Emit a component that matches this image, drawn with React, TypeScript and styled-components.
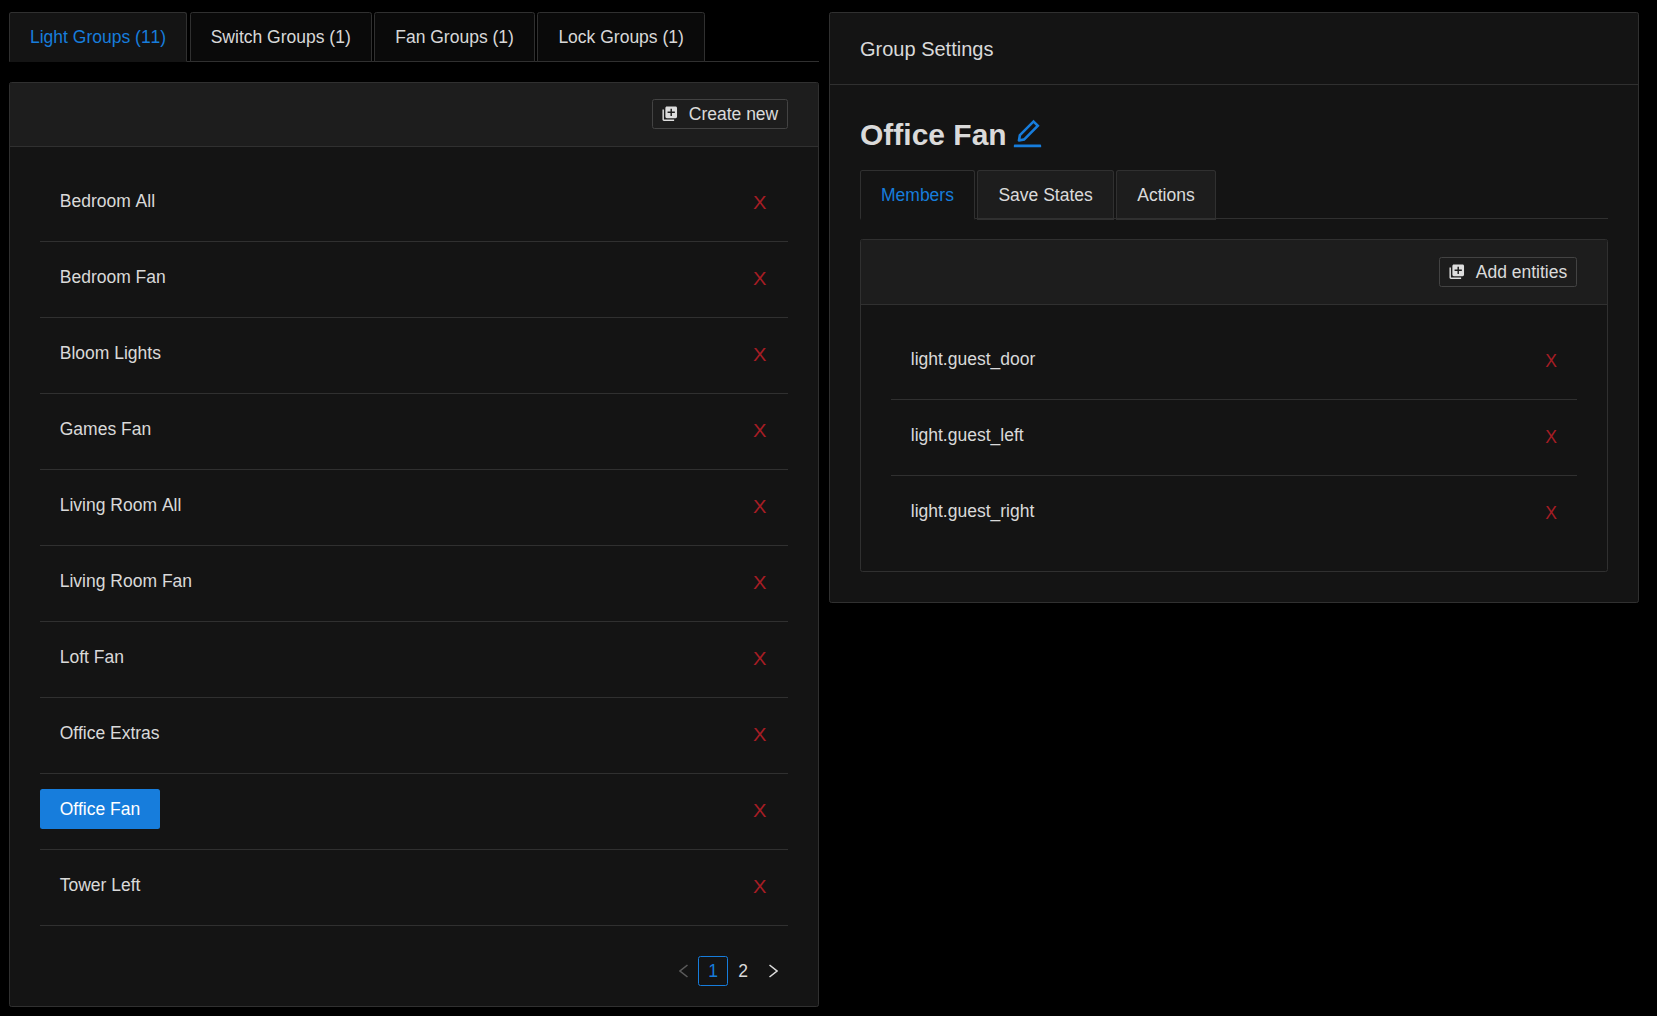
import React from 'react';
import styled, { createGlobalStyle } from 'styled-components';
import { MdLibraryAdd } from 'react-icons/md';
import { AiOutlineEdit } from 'react-icons/ai';

const GlobalStyle = createGlobalStyle`
  * { box-sizing: border-box; }
  body {
    margin: 0;
    background: #000;
    color: rgba(255, 255, 255, 0.85);
    font-family: "Liberation Sans", Arial, sans-serif;
    font-size: 17.5px;
    line-height: 27.5px;
    font-variant: tabular-nums;
    font-feature-settings: 'tnum';
  }
`;

const Page = styled.main`
  display: flex;
  align-items: flex-start;
  gap: 10px;
  padding: 12px 18px 0 9px;
`;

const Column = styled.section`
  flex: 0 0 810px;
  min-width: 0;
`;

const Card = styled.div`
  background: #141414;
  border: 1px solid #303030;
  border-radius: 2.5px;
`;

const Title = styled.h3`
  margin: 0;
  height: 72px;
  padding: 21px 30px 0;
  border-bottom: 1px solid #303030;
  font-size: 20px;
  font-weight: 500;
  line-height: 31.4px;
`;

const Toolbar = styled.div<{ $height: number }>`
  display: flex;
  align-items: flex-start;
  justify-content: flex-end;
  height: ${(p) => p.$height}px;
  padding: ${(p) => (p.$height > 64 ? 17 : 16)}px 30px 0;
  background: #1d1d1d;
  border-bottom: 1px solid #303030;
`;

const TabBar = styled.nav<{ $height: number }>`
  display: flex;
  gap: 2.5px;
  height: ${(p) => p.$height}px;
  margin-bottom: 20px;
  box-shadow: inset 0 -1px #303030;
`;

const Tab = styled.button<{ $active?: boolean; $bg: string; $edge: number }>`
  flex: none;
  height: 50px;
  padding: ${(p) => p.$edge + 1}px 20px 0;
  border: 1px solid #303030;
  border-bottom: ${(p) => p.$edge}px solid ${(p) => (p.$active ? '#141414' : '#303030')};
  border-radius: 2.5px 2.5px 0 0;
  background: ${(p) => (p.$active ? '#141414' : p.$bg)};
  color: ${(p) => (p.$active ? '#177ddc' : 'rgba(255, 255, 255, 0.85)')};
  font: inherit;
  font-kerning: ${(p) => (p.$active ? 'none' : 'auto')};
  white-space: nowrap;
`;

const SmallButton = styled.button`
  display: flex;
  align-items: center;
  gap: 10px;
  height: 30px;
  padding: 0 8.75px 0 8.6px;
  border: 1px solid #434343;
  border-radius: 2.5px;
  background: transparent;
  color: inherit;
  font: inherit;
  white-space: nowrap;
`;

const ButtonText = styled.span`
  padding-top: 1.5px;
`;

const List = styled.ul`
  margin: 0;
  padding: 0;
  list-style: none;
`;

const Row = styled.li`
  display: flex;
  align-items: flex-start;
  justify-content: space-between;
  height: 76px;
  padding-top: 15px;
  border-bottom: 1px solid #303030;
  &[data-last='true'] { border-bottom: 0; }
`;

const RowLabel = styled.button<{ $selected?: boolean; $unkerned?: boolean }>`
  height: 40px;
  padding: 1.5px 20px 0 19.75px;
  border: 0;
  border-radius: 2.5px;
  background: ${(p) => (p.$selected ? '#177ddc' : 'transparent')};
  color: ${(p) => (p.$selected ? '#fff' : 'inherit')};
  font: inherit;
  font-kerning: ${(p) => (p.$unkerned ? 'none' : 'auto')};
`;

const Remove = styled.button<{ $wide?: boolean }>`
  height: 40px;
  margin-top: 2px;
  padding: 1.5px ${(p) => (p.$wide ? 22.75 : 20)}px 0;
  border: 0;
  background: transparent;
  color: #a61d24;
  font: inherit;
  span {
    display: inline-block;
    transform: ${(p) => (p.$wide ? 'scaleX(1.15)' : 'none')};
  }
`;

const GroupBody = styled.div`
  padding: 19px 30px 20px;
`;

const Pager = styled.div`
  display: flex;
  justify-content: flex-end;
  margin-top: 30px;
`;

const PageItem = styled.button<{ $active?: boolean; $muted?: boolean }>`
  display: flex;
  align-items: center;
  justify-content: center;
  width: 30px;
  height: 30px;
  padding: 0;
  border: 1px solid ${(p) => (p.$active ? '#177ddc' : 'transparent')};
  border-radius: 2.5px;
  background: transparent;
  color: ${(p) => (p.$active ? '#177ddc' : p.$muted ? 'rgba(255, 255, 255, 0.3)' : 'inherit')};
  font: inherit;
  svg { margin-left: 1px; }
`;

const SettingsBody = styled.div`
  padding: 30px;
`;

const Heading = styled.h2`
  display: flex;
  align-items: center;
  gap: 3px;
  height: 40px;
  margin: 0 0 15px;
  font-size: 30px;
  font-weight: 600;
  line-height: 40px;
  svg { color: #177ddc; margin-top: -3px; }
`;

const Members = styled.div`
  padding: 19px 30px;
`;

const Chevron = ({ flip }: { flip?: boolean }) => (
  <svg width="9" height="14" viewBox="0 0 9 14" fill="none" stroke="currentColor" strokeWidth="1.6">
    <path d={flip ? 'M0.5 1L8 7L0.5 13' : 'M8.5 1L1 7L8.5 13'} />
  </svg>
);

const tabs = ['Light Groups (11)', 'Switch Groups (1)', 'Fan Groups (1)', 'Lock Groups (1)'];
const settingTabs = ['Members', 'Save States', 'Actions'];
const groups = [
  'Bedroom All', 'Bedroom Fan', 'Bloom Lights', 'Games Fan', 'Living Room All',
  'Living Room Fan', 'Loft Fan', 'Office Extras', 'Office Fan', 'Tower Left',
];
const members = ['light.guest_door', 'light.guest_left', 'light.guest_right'];

export default function App() {
  return (
    <>
      <GlobalStyle />
      <Page>
        <Column>
          <TabBar $height={50}>
            {tabs.map((t, i) => <Tab key={t} $active={i === 0} $bg="#0a0a0a" $edge={1}>{t}</Tab>)}
          </TabBar>
          <Card>
            <Toolbar $height={64}>
              <SmallButton><MdLibraryAdd size={17.5} /><ButtonText>Create new</ButtonText></SmallButton>
            </Toolbar>
            <GroupBody>
              <List>
                {groups.map((g) => (
                  <Row key={g}>
                    <RowLabel $selected={g === 'Office Fan'} $unkerned={g.endsWith(' All')}>{g}</RowLabel>
                    <Remove $wide><span>X</span></Remove>
                  </Row>
                ))}
              </List>
              <Pager>
                <PageItem $muted><Chevron /></PageItem>
                <PageItem $active><ButtonText>1</ButtonText></PageItem>
                <PageItem><ButtonText>2</ButtonText></PageItem>
                <PageItem><Chevron flip /></PageItem>
              </Pager>
            </GroupBody>
          </Card>
        </Column>
        <Column>
          <Card>
            <Title>Group Settings</Title>
            <SettingsBody>
              <Heading>Office Fan<AiOutlineEdit size={35} /></Heading>
              <TabBar $height={49}>
                {settingTabs.map((t, i) => <Tab key={t} $active={i === 0} $bg="#1d1d1d" $edge={2}>{t}</Tab>)}
              </TabBar>
              <Card>
                <Toolbar $height={65}>
                  <SmallButton><MdLibraryAdd size={17.5} /><ButtonText>Add entities</ButtonText></SmallButton>
                </Toolbar>
                <Members>
                  <List>
                    {members.map((m, i) => (
                      <Row key={m} data-last={i === members.length - 1}>
                        <RowLabel>{m}</RowLabel>
                        <Remove><span>X</span></Remove>
                      </Row>
                    ))}
                  </List>
                </Members>
              </Card>
            </SettingsBody>
          </Card>
        </Column>
      </Page>
    </>
  );
}
